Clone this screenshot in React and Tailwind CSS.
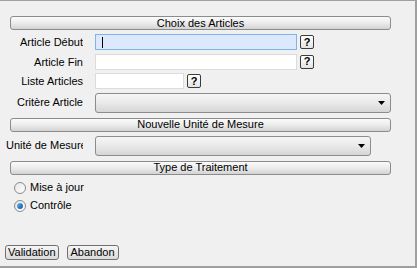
function SectionBar({ title, className = "" }) {
  return (
    <div
      className={
        "ml-[10px] w-[381px] h-[14px] rounded-[3px] border border-[#8c8c8c] bg-gradient-to-b from-[#fbfbfb] via-[#ececec] to-[#d3d3d3] flex items-center justify-center leading-none " +
        className
      }
    >
      {title}
    </div>
  );
}

function HelpButton() {
  return (
    <div className="w-[14px] h-[14px] ml-[3px] rounded-[2px] border border-[#3c3c3c] bg-gradient-to-b from-white to-[#e4e4e4] flex items-center justify-center text-[11px] font-bold leading-none">
      ?
    </div>
  );
}

function Select({ width }) {
  return (
    <div
      className="h-[20px] rounded-[3px] border border-[#8c8c8c] bg-gradient-to-b from-[#f6f6f6] via-[#e9e9e9] to-[#d6d6d6] flex items-center justify-end pr-[5px]"
      style={{ width }}
    >
      <svg width="7" height="4" viewBox="0 0 7 4">
        <path d="M0 0H7L3.5 4Z" fill="#000" />
      </svg>
    </div>
  );
}

function Row({ label, left = false, children, className = "" }) {
  return (
    <div className={"flex items-center " + className}>
      <div
        className={
          "w-[77px] ml-[6px] overflow-hidden whitespace-nowrap " +
          (left ? "text-left" : "text-right")
        }
      >
        {label}
      </div>
      <div className="ml-[12px] flex items-center">{children}</div>
    </div>
  );
}

function Radio({ label, checked }) {
  return (
    <div className="flex items-center h-[18px]">
      <div className="ml-[14px] w-[12px] h-[12px] rounded-full border border-[#8a8a8a] bg-gradient-to-br from-[#e6e6e6] to-white flex items-center justify-center">
        {checked && (
          <div className="w-[6px] h-[6px] rounded-full bg-gradient-to-br from-[#6ab8f0] to-[#0c4f9c]" />
        )}
      </div>
      <span className="ml-[4px]">{label}</span>
    </div>
  );
}

export default function App() {
  return (
    <div
      className="w-[417px] h-[268px] bg-[#f0f0f0] border-t border-r-2 border-b-2 border-[#a0a0a0] text-[11px] text-black flex flex-col"
      style={{ fontFamily: '"Liberation Sans", Arial, sans-serif' }}
    >
      <SectionBar title="Choix des Articles" className="mt-[15px]" />

      <Row label="Article Début" className="mt-[4px]">
        <div className="w-[202px] h-[16px] border border-[#7eb4ea] bg-[#dce8fc] flex items-center pl-[6px]">
          <div className="w-px h-[11px] bg-black" />
        </div>
        <HelpButton />
      </Row>
      <Row label="Article Fin" className="mt-[3px]">
        <div className="w-[202px] h-[16px] border border-[#dcdcdc] bg-white" />
        <HelpButton />
      </Row>
      <Row label="Liste Articles" className="mt-[3px]">
        <div className="w-[89px] h-[16px] border border-[#dcdcdc] bg-white" />
        <HelpButton />
      </Row>
      <Row label="Critère Article" className="mt-[3px]">
        <Select width={296} />
      </Row>

      <SectionBar title="Nouvelle Unité de Mesure" className="mt-[5px]" />

      <Row label="Unité de Mesure" left className="mt-[4px]">
        <Select width={276} />
      </Row>

      <SectionBar title="Type de Traitement" className="mt-[5px]" />

      <div className="mt-[4px] flex flex-col">
        <Radio label="Mise à jour" />
        <Radio label="Contrôle" checked />
      </div>

      <div className="mt-auto mb-[6px] ml-[5px] flex gap-[8px]">
        <div className="h-[15px] px-[2px] rounded-[3px] border border-[#707070] bg-gradient-to-b from-[#f6f6f6] to-[#dadada] flex items-center leading-none">
          Validation
        </div>
        <div className="h-[15px] px-[3px] rounded-[3px] border border-[#707070] bg-gradient-to-b from-[#f6f6f6] to-[#dadada] flex items-center leading-none">
          Abandon
        </div>
      </div>
    </div>
  );
}
